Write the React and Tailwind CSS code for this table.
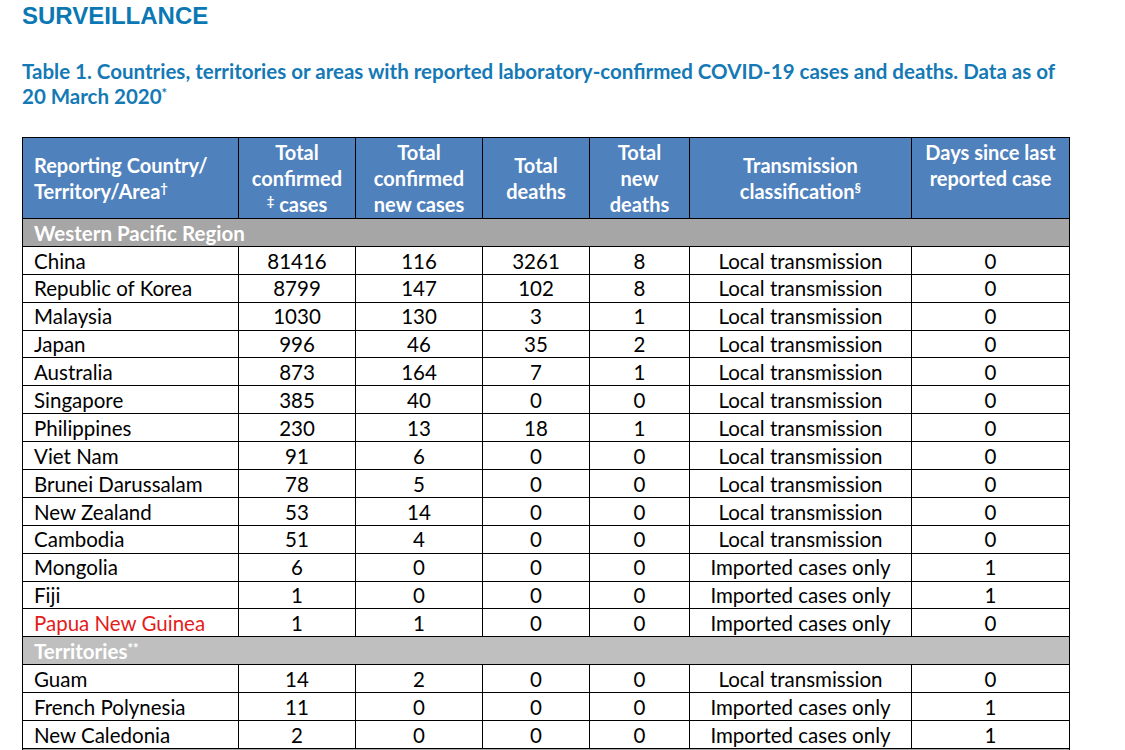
const rows = [
  ['China', '81416', '116', '3261', '8', 'Local transmission', '0'],
  ['Republic of Korea', '8799', '147', '102', '8', 'Local transmission', '0'],
  ['Malaysia', '1030', '130', '3', '1', 'Local transmission', '0'],
  ['Japan', '996', '46', '35', '2', 'Local transmission', '0'],
  ['Australia', '873', '164', '7', '1', 'Local transmission', '0'],
  ['Singapore', '385', '40', '0', '0', 'Local transmission', '0'],
  ['Philippines', '230', '13', '18', '1', 'Local transmission', '0'],
  ['Viet Nam', '91', '6', '0', '0', 'Local transmission', '0'],
  ['Brunei Darussalam', '78', '5', '0', '0', 'Local transmission', '0'],
  ['New Zealand', '53', '14', '0', '0', 'Local transmission', '0'],
  ['Cambodia', '51', '4', '0', '0', 'Local transmission', '0'],
  ['Mongolia', '6', '0', '0', '0', 'Imported cases only', '1'],
  ['Fiji', '1', '0', '0', '0', 'Imported cases only', '1'],
  ['Papua New Guinea', '1', '1', '0', '0', 'Imported cases only', '0', true],
]

const territories = [
  ['Guam', '14', '2', '0', '0', 'Local transmission', '0'],
  ['French Polynesia', '11', '0', '0', '0', 'Imported cases only', '1'],
  ['New Caledonia', '2', '0', '0', '0', 'Imported cases only', '1'],
]

function DataRow({ r }) {
  return (
    <tr className="h-[27.9px]">
      <td className={`border border-black pl-[11px] pt-[1px] ${r[7] ? 'text-[#e31c1c]' : ''}`}>{r[0]}</td>
      {r.slice(1, 7).map((c, i) => (
        <td key={i} className="border border-black pt-[1px] text-center">
          {c}
        </td>
      ))}
    </tr>
  )
}

function SectionRow({ children, light }) {
  return (
    <tr className="h-[27.9px]">
      <td
        colSpan={7}
        className={`border border-black pl-[11px] pt-[1px] font-bold text-white ${light ? 'bg-[#bfbfbf]' : 'bg-[#a6a6a6]'}`}
      >
        {children}
      </td>
    </tr>
  )
}

function App() {
  return (
    <div
      className="h-[750px] overflow-hidden bg-white px-[22px] pt-[2px]"
      style={{ fontFamily: 'Lato, "Liberation Sans", sans-serif' }}
    >
      <h1 className="font-['Liberation_Sans',sans-serif] text-[24px] font-bold leading-[28px] text-[#0b78b4]">
        SURVEILLANCE
      </h1>
      <p className="mt-[29px] text-[20.5px] font-bold leading-[25px] text-[#1479b5]">
        Table 1. Countries, territories or areas with reported laboratory-confirmed COVID-19 cases and deaths. Data as of
        <br />
        20 March 2020<sup className="text-[13px]">*</sup>
      </p>
      <table className="mt-[28px] table-fixed border-collapse text-[20.5px] leading-none text-black">
        <colgroup>
          <col className="w-[216px]" />
          <col className="w-[117px]" />
          <col className="w-[127px]" />
          <col className="w-[107px]" />
          <col className="w-[100px]" />
          <col className="w-[222px]" />
          <col className="w-[158px]" />
        </colgroup>
        <thead>
          <tr className="h-[81px] bg-[#4f81bd] text-[20px] font-bold leading-[26px] text-white">
            <th className="border border-black pl-[11px] text-left font-bold">
              Reporting Country/
              <br />
              Territory/Area<sup className="text-[13px]">†</sup>
            </th>
            <th className="border border-black text-center font-bold">
              Total
              <br />
              confirmed
              <br />
              <sup className="text-[13px]">‡</sup> cases
            </th>
            <th className="border border-black text-center font-bold">
              Total
              <br />
              confirmed
              <br />
              new cases
            </th>
            <th className="border border-black text-center font-bold">
              Total
              <br />
              deaths
            </th>
            <th className="border border-black text-center font-bold">
              Total
              <br />
              new
              <br />
              deaths
            </th>
            <th className="border border-black text-center font-bold">
              Transmission
              <br />
              classification<sup className="text-[13px]">§</sup>
            </th>
            <th className="border border-black pb-[26px] text-center font-bold">
              Days since last
              <br />
              reported case
            </th>
          </tr>
        </thead>
        <tbody>
          <SectionRow>Western Pacific Region</SectionRow>
          {rows.map((r) => (
            <DataRow key={r[0]} r={r} />
          ))}
          <SectionRow light>
            Territories<sup className="text-[13px]">**</sup>
          </SectionRow>
          {territories.map((r) => (
            <DataRow key={r[0]} r={r} />
          ))}
          <SectionRow></SectionRow>
        </tbody>
      </table>
    </div>
  )
}

export default App
